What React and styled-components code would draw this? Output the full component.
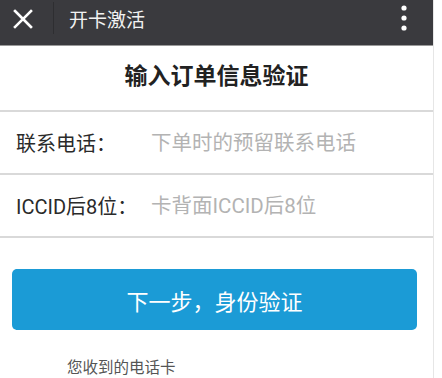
import React from 'react';
import styled, {createGlobalStyle} from 'styled-components';

const GlobalStyle = createGlobalStyle`
  html, body {
    margin: 0;
    padding: 0;
    background: #ffffff;
  }
  body {
    font-family: Roboto, "Noto Sans CJK SC", sans-serif;
  }
`;

const Page = styled.div`
  width: 433px;
  min-height: 378px;
  border-right: 1px solid #e6e6e6;
  background: #ffffff;
`;

const Header = styled.div`
  display: flex;
  align-items: center;
  height: 45px;
  background: #3a3a3e;
  border-bottom: 1px solid #9a9a9a;
  color: #ffffff;
`;

const CloseButton = styled.div`
  display: flex;
  align-items: center;
  justify-content: center;
  width: 46px;
  height: 36px;
  margin-top: -8px;
`;

const Separator = styled.div`
  width: 1px;
  height: 32px;
  margin-top: -10px;
  background: #2e2e31;
  margin-left: 7px;
`;

const HeaderTitle = styled.div`
  flex: 1;
  margin-left: 15px;
  margin-top: -8px;
  font-size: 19px;
  color: #f2f2f2;
`;

const MoreButton = styled.div`
  display: flex;
  align-items: center;
  justify-content: center;
  width: 20px;
  margin-right: 19px;
  margin-top: -10px;
`;

const Title = styled.h1`
  margin: 0;
  padding: 16px 0 18px;
  line-height: 30px;
  font-size: 23px;
  font-weight: 700;
  text-align: center;
  color: #222222;
  border-bottom: 2px solid #d9d9d9;
`;

const Row = styled.div`
  display: flex;
  align-items: center;
  height: 61px;
  padding-left: 16px;
  border-bottom: 2px solid #d9d9d9;
`;

const Label = styled.label`
  width: 135px;
  flex-shrink: 0;
  font-size: 20px;
  color: #2a2a2a;
`;

const Input = styled.input`
  flex: 1;
  min-width: 0;
  border: none;
  outline: none;
  padding: 0;
  background: transparent;
  font-family: Roboto, "Noto Sans CJK SC", sans-serif;
  font-size: 20.5px;
  color: #333333;

  &::placeholder {
    color: #b3b3b3;
  }
`;

const SubmitButton = styled.button`
  display: block;
  width: 405px;
  height: 61px;
  margin: 31px 0 0 12px;
  border: none;
  border-radius: 5px;
  background: #1b9bd6;
  color: #ffffff;
  font-family: Roboto, "Noto Sans CJK SC", sans-serif;
  font-size: 22px;
  cursor: pointer;
`;

const Note = styled.p`
  margin: 28px 0 0 67px;
  font-size: 15.5px;
  line-height: 20px;
  color: #555555;
`;

export default function App() {
  return (
    <>
      <GlobalStyle />
      <Page>
        <Header>
          <CloseButton>
            <svg width="20" height="20" viewBox="0 0 20 20">
              <path d="M2 2 L18 18 M18 2 L2 18" stroke="#ffffff" strokeWidth="2.6" strokeLinecap="square" />
            </svg>
          </CloseButton>
          <Separator />
          <HeaderTitle>开卡激活</HeaderTitle>
          <MoreButton>
            <svg width="6" height="26" viewBox="0 0 6 26">
              <circle cx="3" cy="3" r="2.6" fill="#ffffff" />
              <circle cx="3" cy="13" r="2.6" fill="#ffffff" />
              <circle cx="3" cy="23" r="2.6" fill="#ffffff" />
            </svg>
          </MoreButton>
        </Header>
        <Title>输入订单信息验证</Title>
        <Row>
          <Label>联系电话：</Label>
          <Input placeholder="下单时的预留联系电话" />
        </Row>
        <Row>
          <Label>ICCID后8位：</Label>
          <Input placeholder="卡背面ICCID后8位" />
        </Row>
        <SubmitButton>下一步，身份验证</SubmitButton>
        <Note>您收到的电话卡</Note>
      </Page>
    </>
  );
}
